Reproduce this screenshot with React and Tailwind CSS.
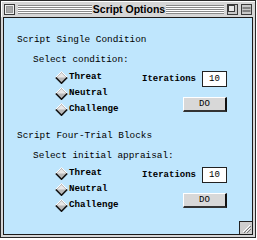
import React from "react";

const mono = { fontFamily: '"Liberation Mono", "DejaVu Sans Mono", monospace' };

function Diamond() {
  return (
    <svg width="13" height="13" viewBox="0 0 13 13" className="shrink-0">
      <polygon points="6.5,0.5 12.5,6.5 6.5,12.5 0.5,6.5" fill="#b8b8b8" />
      <polygon points="6.5,2 11,6.5 6.5,6.5 2,6.5" fill="#e8e8e8" />
      <polyline points="0.5,6.5 6.5,0.5 12.5,6.5" stroke="#ffffff" fill="none" />
      <polyline points="0.8,6.5 6.5,12.2 12.2,6.5" stroke="#111" fill="none" strokeWidth="1.6" />
    </svg>
  );
}

function Radio({ label }) {
  return (
    <div className="h-[16px] flex items-center gap-[1px]">
      <Diamond />
      <span className="text-[9.2px] font-bold leading-none text-black" style={mono}>{label}</span>
    </div>
  );
}

function Section({ title, sub }) {
  return (
    <div className="flex flex-col">
      <div className="h-[20px] flex items-center pl-[13px] text-[9.4px] leading-none text-black" style={mono}>{title}</div>
      <div className="h-[19px] flex items-center pl-[29px] text-[9.4px] leading-none text-black" style={mono}>{sub}</div>
      <div className="flex justify-between pr-[25px]">
        <div className="flex flex-col pl-[51px]">
          <Radio label="Threat" />
          <Radio label="Neutral" />
          <Radio label="Challenge" />
        </div>
        <div className="flex flex-col items-end w-[90px] pt-[2px]">
          <div className="flex items-center gap-[6px] h-[16px]">
            <span className="text-[9px] font-bold leading-none" style={mono}>Iterations</span>
            <div className="w-[25px] h-[16px] bg-white border border-[#222] flex items-center justify-center text-[9px] leading-none" style={mono}>10</div>
          </div>
          <div className="mt-[10px] w-[44px] h-[15px] bg-[#d8d8d8] border-t border-l border-t-white border-l-white border-r-2 border-b-2 border-r-[#111] border-b-[#333] flex items-center justify-center text-[9px] leading-none" style={mono}>DO</div>
        </div>
      </div>
    </div>
  );
}

const stripes = "h-[9px] bg-[repeating-linear-gradient(to_bottom,#8a8a8a_0px,#8a8a8a_1px,#ffffff_1px,#ffffff_2px)]";

export default function App() {
  return (
    <div className="w-[257px] h-[240px] bg-white">
      <div className="w-[256px] h-[238px] border border-[#2a2a2a] bg-[#d6d6d6] flex flex-col relative">
        {/* title bar */}
        <div className="h-[16px] flex items-center pl-[2px] border-t border-l border-t-white border-l-white">
          <svg width="11" height="11" viewBox="0 0 11 11" className="shrink-0">
            <rect x="0.5" y="0.5" width="10" height="10" fill="#bdbdbd" stroke="#3a3a3a" />
            <rect x="1.5" y="1.5" width="8" height="8" fill="#9a9a9a" stroke="#eeeeee" />
            <rect x="3" y="3" width="5" height="5" fill="#a8a8a8" />
          </svg>
          <div className={"ml-[3px] w-[74px] " + stripes} />
          <div className="w-[74px] flex justify-center text-[10.5px] font-bold leading-none text-black" style={{ fontFamily: '"Liberation Sans", Arial, sans-serif' }}>Script Options</div>
          <div className={"w-[58px] " + stripes} />
          <div className="ml-[3px] flex gap-[3px]">
            <svg width="11" height="11" viewBox="0 0 11 11" className="shrink-0">
              <rect x="0.5" y="0.5" width="10" height="10" fill="#c8c8c8" stroke="#3a3a3a" />
              <rect x="1.5" y="1.5" width="6" height="6" fill="#e8e8e8" stroke="#3a3a3a" />
            </svg>
            <svg width="11" height="11" viewBox="0 0 11 11" className="shrink-0">
              <rect x="0.5" y="0.5" width="10" height="10" fill="#c8c8c8" stroke="#3a3a3a" />
              <line x1="1.5" y1="4" x2="9.5" y2="4" stroke="#3a3a3a" />
              <line x1="1.5" y1="7" x2="9.5" y2="7" stroke="#3a3a3a" />
            </svg>
          </div>
        </div>
        {/* content */}
        <div className="flex-1 mx-[2px] mb-[2px] border border-[#1a1a1a] bg-[#bfe6fd] pt-[12px] flex flex-col gap-[9px] relative">
          <Section title="Script Single Condition" sub="Select condition:" />
          <Section title="Script Four-Trial Blocks" sub="Select initial appraisal:" />
          {/* size box */}
          <div className="absolute right-0 bottom-0 w-[13px] h-[13px] bg-[#cfcfcf] border-t border-l border-[#222]">
            <svg width="12" height="12" viewBox="0 0 12 12">
              <line x1="3" y1="10" x2="10" y2="3" stroke="#fff" />
              <line x1="4" y1="11" x2="11" y2="4" stroke="#777" />
              <line x1="6" y1="10" x2="10" y2="6" stroke="#fff" />
              <line x1="7" y1="11" x2="11" y2="7" stroke="#777" />
            </svg>
          </div>
        </div>
      </div>
    </div>
  );
}
